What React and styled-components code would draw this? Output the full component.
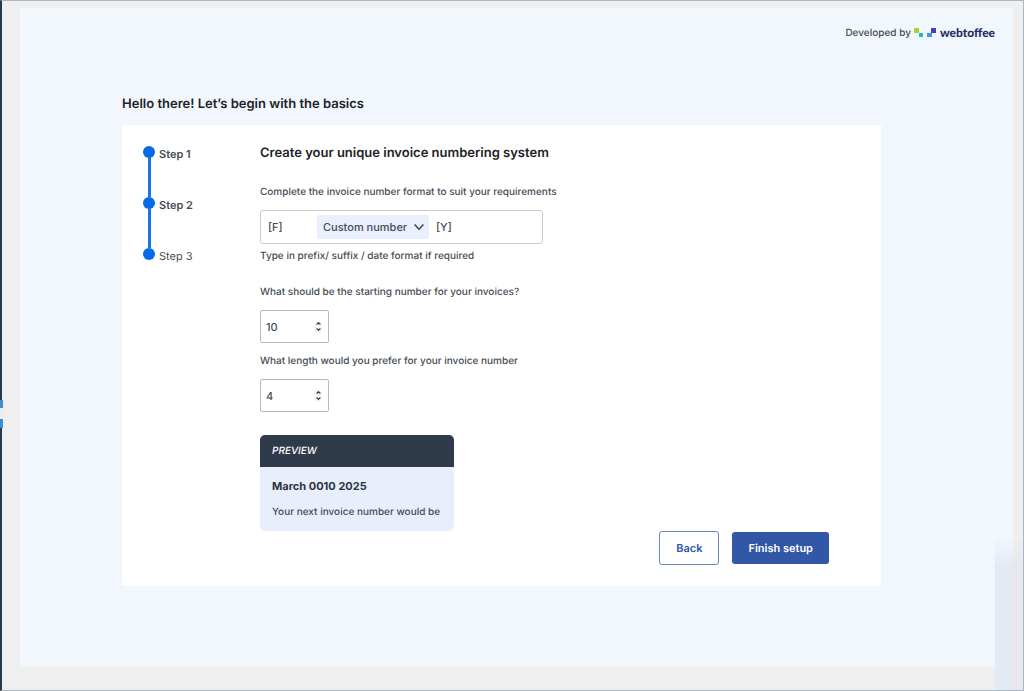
import React, { useState } from "react";
import styled, { createGlobalStyle } from "styled-components";

const GlobalStyle = createGlobalStyle`
  *, *::before, *::after { box-sizing: border-box; }
  body {
    margin: 0;
    background: #efefef;
    color: #454c54;
    font-family: Inter, "Liberation Sans", sans-serif;
    font-size: 10px;
    font-weight: 500;
    line-height: 18px;
    text-rendering: geometricPrecision;
  }
  button, input, select { font: inherit; color: inherit; text-rendering: inherit; }
  h1, h2, p, ol { margin: 0; padding: 0; }
`;

const Shell = styled.div`
  position: relative;
  display: flex;
  min-height: 100vh;
  padding: 7px 10px 23px 18px;
  border: 1px solid #a5b8c8;
  border-left: 2px solid #26394b;

  &::before {
    content: "";
    position: absolute;
    left: -2px;
    top: 399px;
    width: 3px;
    height: 28px;
    background: linear-gradient(#3d8fd0 0 8px, #e9eef2 8px 19px, #3d8fd0 19px);
  }

  &::after {
    content: "";
    position: absolute;
    right: 0;
    bottom: 0;
    width: 28px;
    height: 152px;
    background: linear-gradient(90deg, #e4eaf3 0 14px, #e6e8ee 18px, #e9e9ec 100%);
    mask-image: linear-gradient(transparent, #000 26px);
  }
`;

const Panel = styled.div`
  flex: 1;
  min-width: 0;
  padding: 16px 18px 32px 102px;
  background: #f2f7fe;
`;

const TopBar = styled.header`
  display: flex;
  justify-content: flex-end;
  align-items: center;
  gap: 3px;
`;

const Brand = styled.a`
  display: inline-flex;
  align-items: center;
  gap: 4px;
  color: #262f63;
  font-family: Lato, Inter, sans-serif;
  font-size: 12px;
  font-weight: 900;
  text-decoration: none;
`;

const Setup = styled.main`
  margin: 52px 114px 0 0;
`;

const Greeting = styled.h1`
  color: #1d2327;
  font-size: 13px;
  font-weight: 600;
  line-height: 20px;
`;

const Card = styled.section`
  display: flex;
  margin-top: 11px;
  padding: 18px 52px 21px 21px;
  background: #fff;
`;

const Steps = styled.ol`
  flex: none;
  width: 117px;
  padding-top: 2px;
  list-style: none;
`;

const Step = styled.li`
  position: relative;
  display: flex;
  align-items: flex-start;
  gap: 4px;
  height: 51px;
  font-size: 11px;
  font-weight: ${(p) => (p.$reached ? 600 : 400)};
  line-height: 18px;

  &::before {
    content: "";
    width: 12px;
    height: 12px;
    margin-top: 1px;
    border-radius: 50%;
    background: #056be6;
  }

  &:not(:last-child)::after {
    content: "";
    position: absolute;
    left: 5px;
    top: 12px;
    width: 3px;
    height: 40px;
    background: #1a73e8;
  }
`;

const Form = styled.form`
  flex: 1;
  min-width: 0;
`;

const Title = styled.h2`
  margin-bottom: 20px;
  color: #1d2327;
  font-size: 13px;
  font-weight: 600;
  line-height: 20px;
`;

const Label = styled.label`
  display: block;
`;

const Hint = styled.p`
  margin: 3px 0 18px;
`;

const FormatBox = styled.div`
  display: flex;
  align-items: center;
  width: 283px;
  height: 34px;
  margin-top: 9px;
  border: 1px solid #c9cbce;
  border-radius: 3px;
`;

const AffixInput = styled.input`
  width: ${(p) => p.$width}px;
  padding: 0 7px;
  border: 0;
  outline: 0;
  background: transparent;
  font-size: 11px;
`;

const SelectWrap = styled.div`
  position: relative;
  width: 112px;

  svg {
    position: absolute;
    right: 5px;
    top: 9px;
    pointer-events: none;
  }
`;

const Select = styled.select`
  display: block;
  width: 100%;
  height: 24px;
  padding: 0 0 0 6px;
  border: 0;
  border-radius: 2px;
  background: #e9effc;
  appearance: none;
  font-size: 11px;
`;

const NumberBox = styled.div`
  display: flex;
  align-items: center;
  justify-content: space-between;
  width: 69px;
  height: 33px;
  margin: 9px 0;
  padding: 0 6px 0 5px;
  border: 1px solid #b5b8bc;
  border-radius: 2px;
`;

const NumberInput = styled.input`
  width: 40px;
  padding: 0;
  border: 0;
  outline: 0;
  background: transparent;
  appearance: textfield;
  font-size: 11px;

  &::-webkit-inner-spin-button { display: none; }
`;

const Spinner = styled.div`
  display: flex;
  flex-direction: column;
  border-radius: 3px;
  background: #f6f6f6;
`;

const SpinButton = styled.button`
  display: flex;
  justify-content: center;
  align-items: center;
  width: 8px;
  height: 6px;
  padding: 0;
  border: 0;
  background: transparent;
`;

const Preview = styled.div`
  width: 194px;
  margin-top: 23px;
  overflow: hidden;
  border-radius: 5px;
  background: #e8eefb;
`;

const PreviewHead = styled.div`
  padding: 7px 12px;
  background: #2f3a4a;
  color: #fff;
  font-style: italic;
`;

const PreviewBody = styled.div`
  padding: 10px 12px;
  white-space: nowrap;
`;

const PreviewNumber = styled.p`
  margin-bottom: 8px;
  color: #2b3442;
  font-size: 11px;
  font-weight: 700;
`;

const Actions = styled.div`
  display: flex;
  justify-content: flex-end;
  align-items: center;
  gap: 13px;
`;

const Button = styled.button`
  height: ${(p) => (p.$primary ? 32 : 34)}px;
  padding: 0 16px;
  border: ${(p) => (p.$primary ? "0" : "1px solid #6f88bd")};
  border-radius: 3px;
  background: ${(p) => (p.$primary ? "#3157a6" : "#fff")};
  color: ${(p) => (p.$primary ? "#fff" : "#3157a6")};
  font-size: 11px;
  font-weight: 600;
`;

function BrandMark() {
  return (
    <svg width="22" height="10" viewBox="0 0 22 10" aria-hidden="true">
      <rect x="0" y="0" width="5" height="5" fill="#a3d82a" />
      <rect x="5" y="5" width="4" height="4" fill="#22b9c8" />
      <rect x="13" y="5" width="5" height="4" fill="#3f9be4" />
      <rect x="17" y="0" width="5" height="5" fill="#4b3cc4" />
    </svg>
  );
}

function Chevron({ up, width = 5, height = 3, stroke = 1.2 }) {
  return (
    <svg width={width} height={height} viewBox={`0 0 ${width} ${height}`} fill="none" aria-hidden="true">
      <path
        d={
          up
            ? `M0.6 ${height - 0.5}L${width / 2} 0.7L${width - 0.6} ${height - 0.5}`
            : `M0.6 0.5L${width / 2} ${height - 0.7}L${width - 0.6} 0.5`
        }
        stroke="#3c434a"
        strokeWidth={stroke}
      />
    </svg>
  );
}

function NumberField({ id, label, value, onChange }) {
  return (
    <>
      <Label htmlFor={id}>{label}</Label>
      <NumberBox>
        <NumberInput
          id={id}
          type="number"
          value={value}
          onChange={(e) => onChange(Number(e.target.value))}
        />
        <Spinner>
          <SpinButton type="button" aria-label="Increase" onClick={() => onChange(value + 1)}>
            <Chevron up />
          </SpinButton>
          <SpinButton type="button" aria-label="Decrease" onClick={() => onChange(Math.max(0, value - 1))}>
            <Chevron />
          </SpinButton>
        </Spinner>
      </NumberBox>
    </>
  );
}

export default function App() {
  const [start, setStart] = useState(10);
  const [length, setLength] = useState(4);

  return (
    <>
      <GlobalStyle />
      <Shell>
        <Panel>
          <TopBar>
            <span>Developed by</span>
            <Brand href="#">
              <BrandMark />
              webtoffee
            </Brand>
          </TopBar>
          <Setup>
            <Greeting>Hello there! Let’s begin with the basics</Greeting>
            <Card>
              <Steps>
                <Step $reached>Step 1</Step>
                <Step $reached>Step 2</Step>
                <Step>Step 3</Step>
              </Steps>
              <Form onSubmit={(e) => e.preventDefault()}>
                <Title>Create your unique invoice numbering system</Title>
                <Label htmlFor="format">Complete the invoice number format to suit your requirements</Label>
                <FormatBox>
                  <AffixInput $width={56} aria-label="Prefix" defaultValue="[F]" />
                  <SelectWrap>
                    <Select id="format" defaultValue="custom">
                      <option value="custom">Custom number</option>
                    </Select>
                    <Chevron width={10} height={6} stroke={1.4} />
                  </SelectWrap>
                  <AffixInput $width={110} aria-label="Suffix" defaultValue="[Y]" />
                </FormatBox>
                <Hint>Type in prefix/ suffix / date format if required</Hint>
                <NumberField
                  id="start"
                  label="What should be the starting number for your invoices?"
                  value={start}
                  onChange={setStart}
                />
                <NumberField
                  id="length"
                  label="What length would you prefer for your invoice number"
                  value={length}
                  onChange={setLength}
                />
                <Preview>
                  <PreviewHead>PREVIEW</PreviewHead>
                  <PreviewBody>
                    <PreviewNumber>March {String(start).padStart(length, "0")} 2025</PreviewNumber>
                    <p>Your next invoice number would be</p>
                  </PreviewBody>
                </Preview>
                <Actions>
                  <Button type="button">Back</Button>
                  <Button type="submit" $primary>Finish setup</Button>
                </Actions>
              </Form>
            </Card>
          </Setup>
        </Panel>
      </Shell>
    </>
  );
}
